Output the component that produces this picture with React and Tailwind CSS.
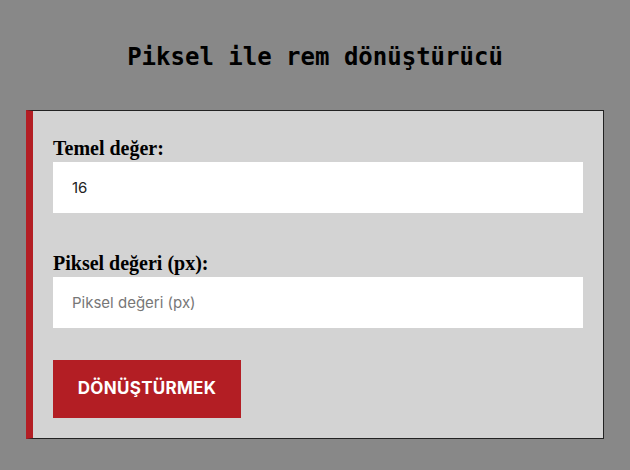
import React, { useState } from "react";

const App = () => {
  const [base, setBase] = useState("16");
  const [px, setPx] = useState("");

  return (
    <div className="min-h-[470px] w-full bg-[#888888] px-[26px] pt-[40px] pb-[30px]">
      {/* Title */}
      <h1 className="text-center text-[24px] font-bold text-black font-['DejaVu_Sans_Mono',monospace] leading-[34px]">
        Piksel ile rem dönüştürücü
      </h1>

      {/* Converter card */}
      <div className="mt-[36px] bg-[#d3d3d3] border border-[#222] border-l-[7px] border-l-[#b31e24] pl-[20px] pr-[20px] pt-[23px] pb-[20px]">
        <label className="block text-[20px] font-bold text-black font-['Liberation_Serif',serif] leading-[28px]">
          Temel değer:
        </label>
        <input
          type="text"
          value={base}
          onChange={(e) => setBase(e.target.value)}
          className="block w-full h-[51px] bg-white px-[19px] text-[15px] text-[#222] font-['Inter',sans-serif] outline-none"
        />

        <label className="mt-[36px] block text-[20px] font-bold text-black font-['Liberation_Serif',serif] leading-[28px]">
          Piksel değeri (px):
        </label>
        <input
          type="text"
          value={px}
          placeholder="Piksel değeri (px)"
          onChange={(e) => setPx(e.target.value)}
          className="block w-full h-[51px] bg-white px-[19px] text-[15px] text-[#222] placeholder:text-[#777] font-['Inter',sans-serif] outline-none"
        />

        <button className="mt-[32px] h-[58px] w-[188px] bg-[#b31e24] text-white text-[17px] font-bold uppercase tracking-[0.3px] font-['Inter',sans-serif]">
          Dönüştürmek
        </button>
      </div>
    </div>
  );
};

export default App;
